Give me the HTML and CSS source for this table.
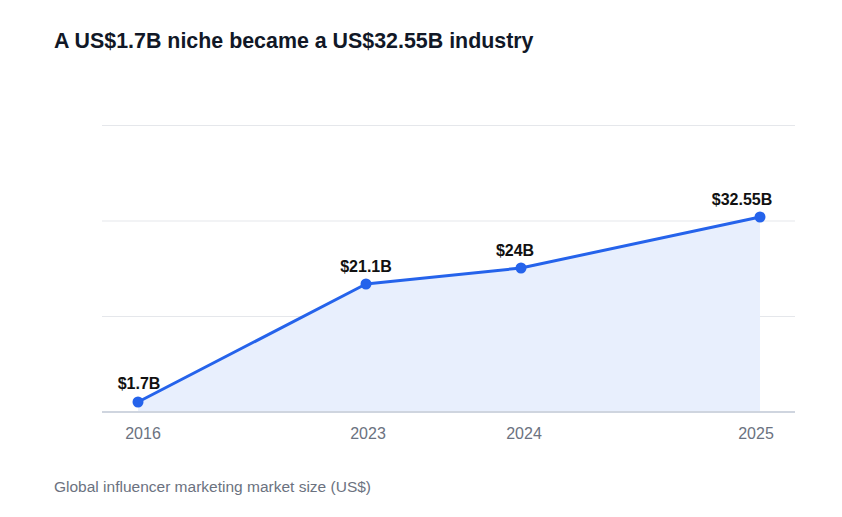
FILE: index.html
```html
<!DOCTYPE html>
<html lang="en">
<head>
<meta charset="utf-8">
<title>Influencer marketing market size</title>
<link rel="stylesheet" href="styles.css">
</head>
<body>
<div class="page">
  <h2 class="title">A US$1.7B niche became a US$32.55B industry</h2>
  <svg class="chart" viewBox="0 53 842 405" width="842" height="405" aria-label="Line chart">
    <g class="grid">
      <line x1="102" y1="125.5" x2="795" y2="125.5"/>
      <line x1="102" y1="221" x2="795" y2="221"/>
      <line x1="102" y1="316.5" x2="795" y2="316.5"/>
    </g>
    <polygon class="area" points="138,402 366,284 521,268 760,217 760,412 138,412"/>
    <line class="axis" x1="102" y1="412" x2="795" y2="412"/>
    <polyline class="line" points="138,402 366,284 521,268 760,217"/>
    <g class="dots">
      <circle cx="138" cy="402" r="5.5"/>
      <circle cx="366" cy="284" r="5.5"/>
      <circle cx="521" cy="268" r="5.5"/>
      <circle cx="760" cy="217" r="5.5"/>
    </g>
    <g class="vals">
      <text x="139" y="389">$1.7B</text>
      <text x="366" y="272">$21.1B</text>
      <text x="515" y="256">$24B</text>
      <text x="742" y="205">$32.55B</text>
    </g>
    <g class="years">
      <text x="143" y="439">2016</text>
      <text x="368" y="439">2023</text>
      <text x="524" y="439">2024</text>
      <text x="756" y="439">2025</text>
    </g>
  </svg>
  <p class="caption">Global influencer marketing market size (US$)</p>
</div>
</body>
</html>
```
FILE: styles.css
```css
html, body {
  margin: 0;
  padding: 0;
  background: #ffffff;
}
body {
  font-family: "Liberation Sans", Arial, sans-serif;
}
.page {
  width: 842px;
  height: 517px;
  padding-top: 29px;
  box-sizing: border-box;
}
.title {
  margin: 0;
  padding-left: 54px;
  font-size: 21.4px;
  line-height: 24px;
  font-weight: 700;
  color: #111827;
}
.chart {
  display: block;
}
.grid line {
  stroke: #e5e7eb;
  stroke-width: 1;
}
.area {
  fill: #e8effd;
}
.axis {
  stroke: #cfd5df;
  stroke-width: 2;
}
.line {
  fill: none;
  stroke: #2563eb;
  stroke-width: 3;
  stroke-linejoin: round;
  stroke-linecap: round;
}
.dots circle {
  fill: #2563eb;
}
.vals text {
  font-family: "Liberation Sans", Arial, sans-serif;
  font-size: 16px;
  font-weight: 700;
  fill: #111111;
  text-anchor: middle;
}
.years text {
  font-family: "Liberation Sans", Arial, sans-serif;
  font-size: 16px;
  fill: #6b7280;
  text-anchor: middle;
}
.caption {
  margin: 20px 0 0;
  padding-left: 54px;
  font-size: 15.5px;
  line-height: 18px;
  color: #6b7280;
}
```
